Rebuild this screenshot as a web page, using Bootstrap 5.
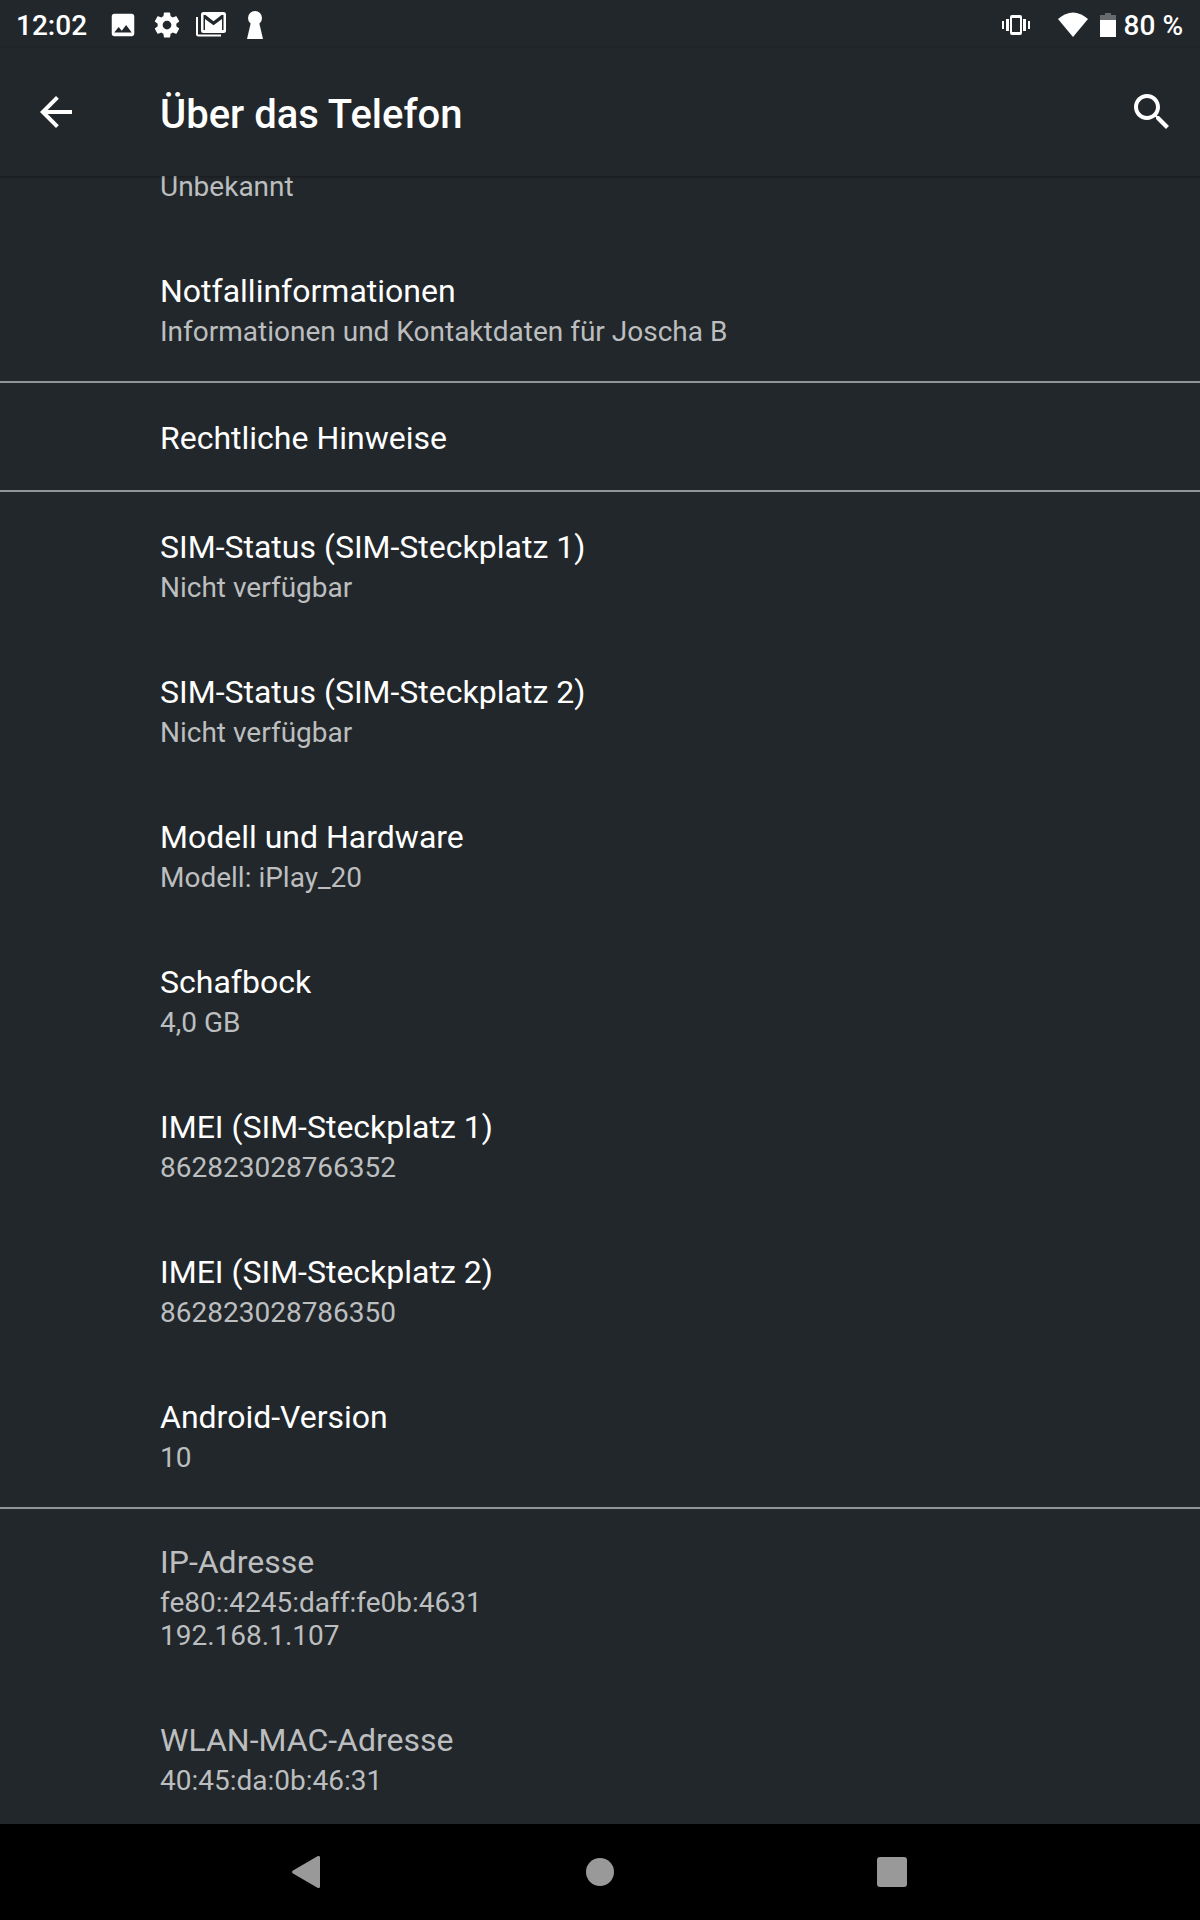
<!DOCTYPE html>
<html lang="de">
<head>
<meta charset="utf-8">
<meta name="viewport" content="width=device-width, initial-scale=1">
<title>Über das Telefon</title>
<link href="https://cdn.jsdelivr.net/npm/bootstrap@5.3.0/dist/css/bootstrap.min.css" rel="stylesheet">
<style>
  body { font-family: Roboto, "Noto Sans", sans-serif; background: #22272b; color: #fff; }
  svg { display: block; fill: currentColor; flex: none; }
  .statusbar { height: 48px; padding: 1px 17px 0 16px; font-size: 28px; line-height: 46px; font-weight: 500; }
  .statusbar span { padding-top: 2px; }
  .status-icons { gap: 14px; margin-left: 21px; }
  .appbar { height: 128px; padding: 0 24px 0 32px; box-shadow: 0 1px 3px rgba(0,0,0,.3); z-index: 1; }
  .appbar .btn { color: #fff; }
  .appbar h1 { font-size: 40px; line-height: 48px; font-weight: 500; margin-left: 80px; padding-top: 6px; }
  .list-area { min-height: 0; }
  .settings { margin-top: -8px; }
  .group + .group { border-top: 2px solid #919598; }
  .entry { padding: 34px 24px 30px 160px; color: inherit; }
  .entry-title { font-size: 32px; line-height: 43px; }
  .entry-text { font-size: 28px; line-height: 33px; margin: 2px 0 3px; color: #bcbebf; }
  .entry-cut { padding-top: 0; }
  .readonly { color: #bcbebf; }
  .readonly .entry:first-child { padding-top: 32px; }
  .navkeys { height: 96px; background: #000; }
  .navkeys .btn { width: 292px; color: #999; }
</style>
<script src="https://cdn.jsdelivr.net/npm/bootstrap@5.3.0/dist/js/bootstrap.bundle.min.js"></script>
</head>
<body class="d-flex flex-column vh-100 overflow-hidden">
<div class="statusbar d-flex align-items-center flex-shrink-0">
  <span>12:02</span>
  <div class="status-icons d-flex align-items-center">
    <svg width="30" height="30" viewBox="0 0 24 24"><path d="M21 19V5c0-1.100-.900-2-2-2H5c-1.100 0-2 .900-2 2v14c0 1.100.900 2 2 2h14c1.100 0 2-.900 2-2zM8.500 13.500l2.500 3.010L14.500 12l4.500 6H5l3.500-4.500z"/></svg>
    <svg width="30" height="30" viewBox="0 0 24 24"><path d="M19.430 12.980c.040-.320.070-.640.070-.980s-.030-.660-.070-.980l2.110-1.650c.190-.150.240-.420.120-.640l-2-3.460c-.120-.220-.390-.300-.610-.220l-2.490 1c-.520-.400-1.080-.730-1.690-.980l-.380-2.650C14.460 2.180 14.250 2 14 2h-4c-.250 0-.460.180-.490.420l-.380 2.650c-.610.250-1.170.590-1.690.980l-2.490-1c-.230-.090-.490 0-.610.220l-2 3.460c-.130.220-.070.490.120.640l2.110 1.650c-.040.320-.070.650-.070.980s.030.660.070.980l-2.110 1.650c-.190.150-.240.420-.120.640l2 3.460c.120.220.390.300.610.220l2.490-1c.520.400 1.080.730 1.690.980l.380 2.650c.030.240.240.420.490.420h4c.250 0 .460-.180.490-.420l.380-2.650c.610-.250 1.170-.590 1.690-.980l2.490 1c.230.090.490 0 .610-.220l2-3.460c.120-.220.070-.490-.120-.640l-2.110-1.650zM12 15.500c-1.930 0-3.500-1.570-3.500-3.500s1.570-3.500 3.500-3.500 3.500 1.570 3.500 3.500-1.570 3.500-3.500 3.500z"/></svg>
    <svg width="30" height="30" viewBox="0 0 30 30"><rect x="5" y="2" width="25" height="21" rx="2.500"/><path fill="#22272b" d="M7.500 5h2l8 6.300L25.500 5h2v15H26V9l-8.500 6.300L9 9v11H7.500z"/><path d="M0 7h2v17.500h23v2H2.500A2.500 2.500 0 0 1 0 24z"/></svg>
    <svg width="30" height="30" viewBox="0 0 30 30"><circle cx="15" cy="8" r="7"/><path d="M11 12h8l4 17H7z"/></svg>
  </div>
  <div class="d-flex align-items-center ms-auto">
    <svg width="28" height="30" viewBox="0 0 28 30"><path d="M0 11h2v8H0zM4 9h3v12H4zM21 9h3v12h-3zM26 11h2v8h-2z"/><path fill-rule="evenodd" d="M10 5h8a2 2 0 0 1 2 2v16a2 2 0 0 1-2 2h-8a2 2 0 0 1-2-2V7a2 2 0 0 1 2-2zm0 3v14h8V8z"/></svg>
    <svg class="ms-4" width="38" height="30" viewBox="0 0 38 30"><path d="M4 9Q19-4 34 9L19 27z"/></svg>
    <svg class="ms-2" width="16" height="30" viewBox="0 0 16 30"><path fill="#676b6e" d="M5 3h6v2h5v5H0V5h5z"/><path d="M0 10h16v17H0z"/></svg>
    <span class="ms-2">80 %</span>
  </div>
</div>
<header class="appbar d-flex align-items-center flex-shrink-0">
  <button class="btn p-0 border-0" type="button" aria-label="Zurück"><svg width="48" height="48" viewBox="0 0 24 24"><path d="M20 11H7.830l5.590-5.590L12 4l-8 8 8 8 1.410-1.410L7.830 13H20v-2z"/></svg></button>
  <h1 class="mb-0 flex-grow-1">Über das Telefon</h1>
  <button class="btn p-0 border-0" type="button" aria-label="Suchen"><svg width="48" height="48" viewBox="0 0 24 24"><path d="M15.500 14h-.790l-.280-.270C15.410 12.590 16 11.110 16 9.500 16 5.910 13.090 3 9.500 3S3 5.910 3 9.500 5.910 16 9.500 16c1.610 0 3.090-.590 4.230-1.570l.270.280v.790l5 4.990L20.490 19l-4.990-5zm-6 0C7.010 14 5 11.990 5 9.500S7.010 5 9.500 5 14 7.010 14 9.500 11.990 14 9.500 14z"/></svg></button>
</header>
<main class="list-area flex-grow-1 overflow-hidden">
  <div class="settings">
    <section class="group">
      <div class="entry entry-cut"><div class="entry-text">Unbekannt</div></div>
      <a href="#" class="entry d-block text-decoration-none"><div class="entry-title">Notfallinformationen</div><div class="entry-text">Informationen und Kontaktdaten für Joscha B</div></a>
    </section>
    <section class="group">
      <a href="#" class="entry d-block text-decoration-none"><div class="entry-title">Rechtliche Hinweise</div></a>
    </section>
    <section class="group">
      <a href="#" class="entry d-block text-decoration-none"><div class="entry-title">SIM-Status (SIM-Steckplatz 1)</div><div class="entry-text">Nicht verfügbar</div></a>
      <a href="#" class="entry d-block text-decoration-none"><div class="entry-title">SIM-Status (SIM-Steckplatz 2)</div><div class="entry-text">Nicht verfügbar</div></a>
      <a href="#" class="entry d-block text-decoration-none"><div class="entry-title">Modell und Hardware</div><div class="entry-text">Modell: iPlay_20</div></a>
      <a href="#" class="entry d-block text-decoration-none"><div class="entry-title">Schafbock</div><div class="entry-text">4,0 GB</div></a>
      <a href="#" class="entry d-block text-decoration-none"><div class="entry-title">IMEI (SIM-Steckplatz 1)</div><div class="entry-text">862823028766352</div></a>
      <a href="#" class="entry d-block text-decoration-none"><div class="entry-title">IMEI (SIM-Steckplatz 2)</div><div class="entry-text">862823028786350</div></a>
      <a href="#" class="entry d-block text-decoration-none"><div class="entry-title">Android-Version</div><div class="entry-text">10</div></a>
    </section>
    <section class="group readonly">
      <div class="entry"><div class="entry-title">IP-Adresse</div><div class="entry-text">fe80::4245:daff:fe0b:4631<br>192.168.1.107</div></div>
      <div class="entry"><div class="entry-title">WLAN-MAC-Adresse</div><div class="entry-text">40:45:da:0b:46:31</div></div>
    </section>
  </div>
</main>
<nav class="navkeys d-flex justify-content-center flex-shrink-0" aria-label="Systemnavigation">
  <button class="btn border-0 d-flex align-items-center justify-content-center" type="button" aria-label="Zurück"><svg width="32" height="32" viewBox="2 0 32 32"><path d="M27 .5q2-1.300 3 .5v30q-1 1.800-3 .5L3 17.500q-2-1.500 0-3z"/></svg></button>
  <button class="btn border-0 d-flex align-items-center justify-content-center" type="button" aria-label="Startseite"><svg width="28" height="28" viewBox="0 0 28 28"><circle cx="14" cy="14" r="14"/></svg></button>
  <button class="btn border-0 d-flex align-items-center justify-content-center" type="button" aria-label="Übersicht"><svg width="30" height="30" viewBox="0 0 30 30"><rect width="30" height="30" rx="3"/></svg></button>
</nav>
</body>
</html>
